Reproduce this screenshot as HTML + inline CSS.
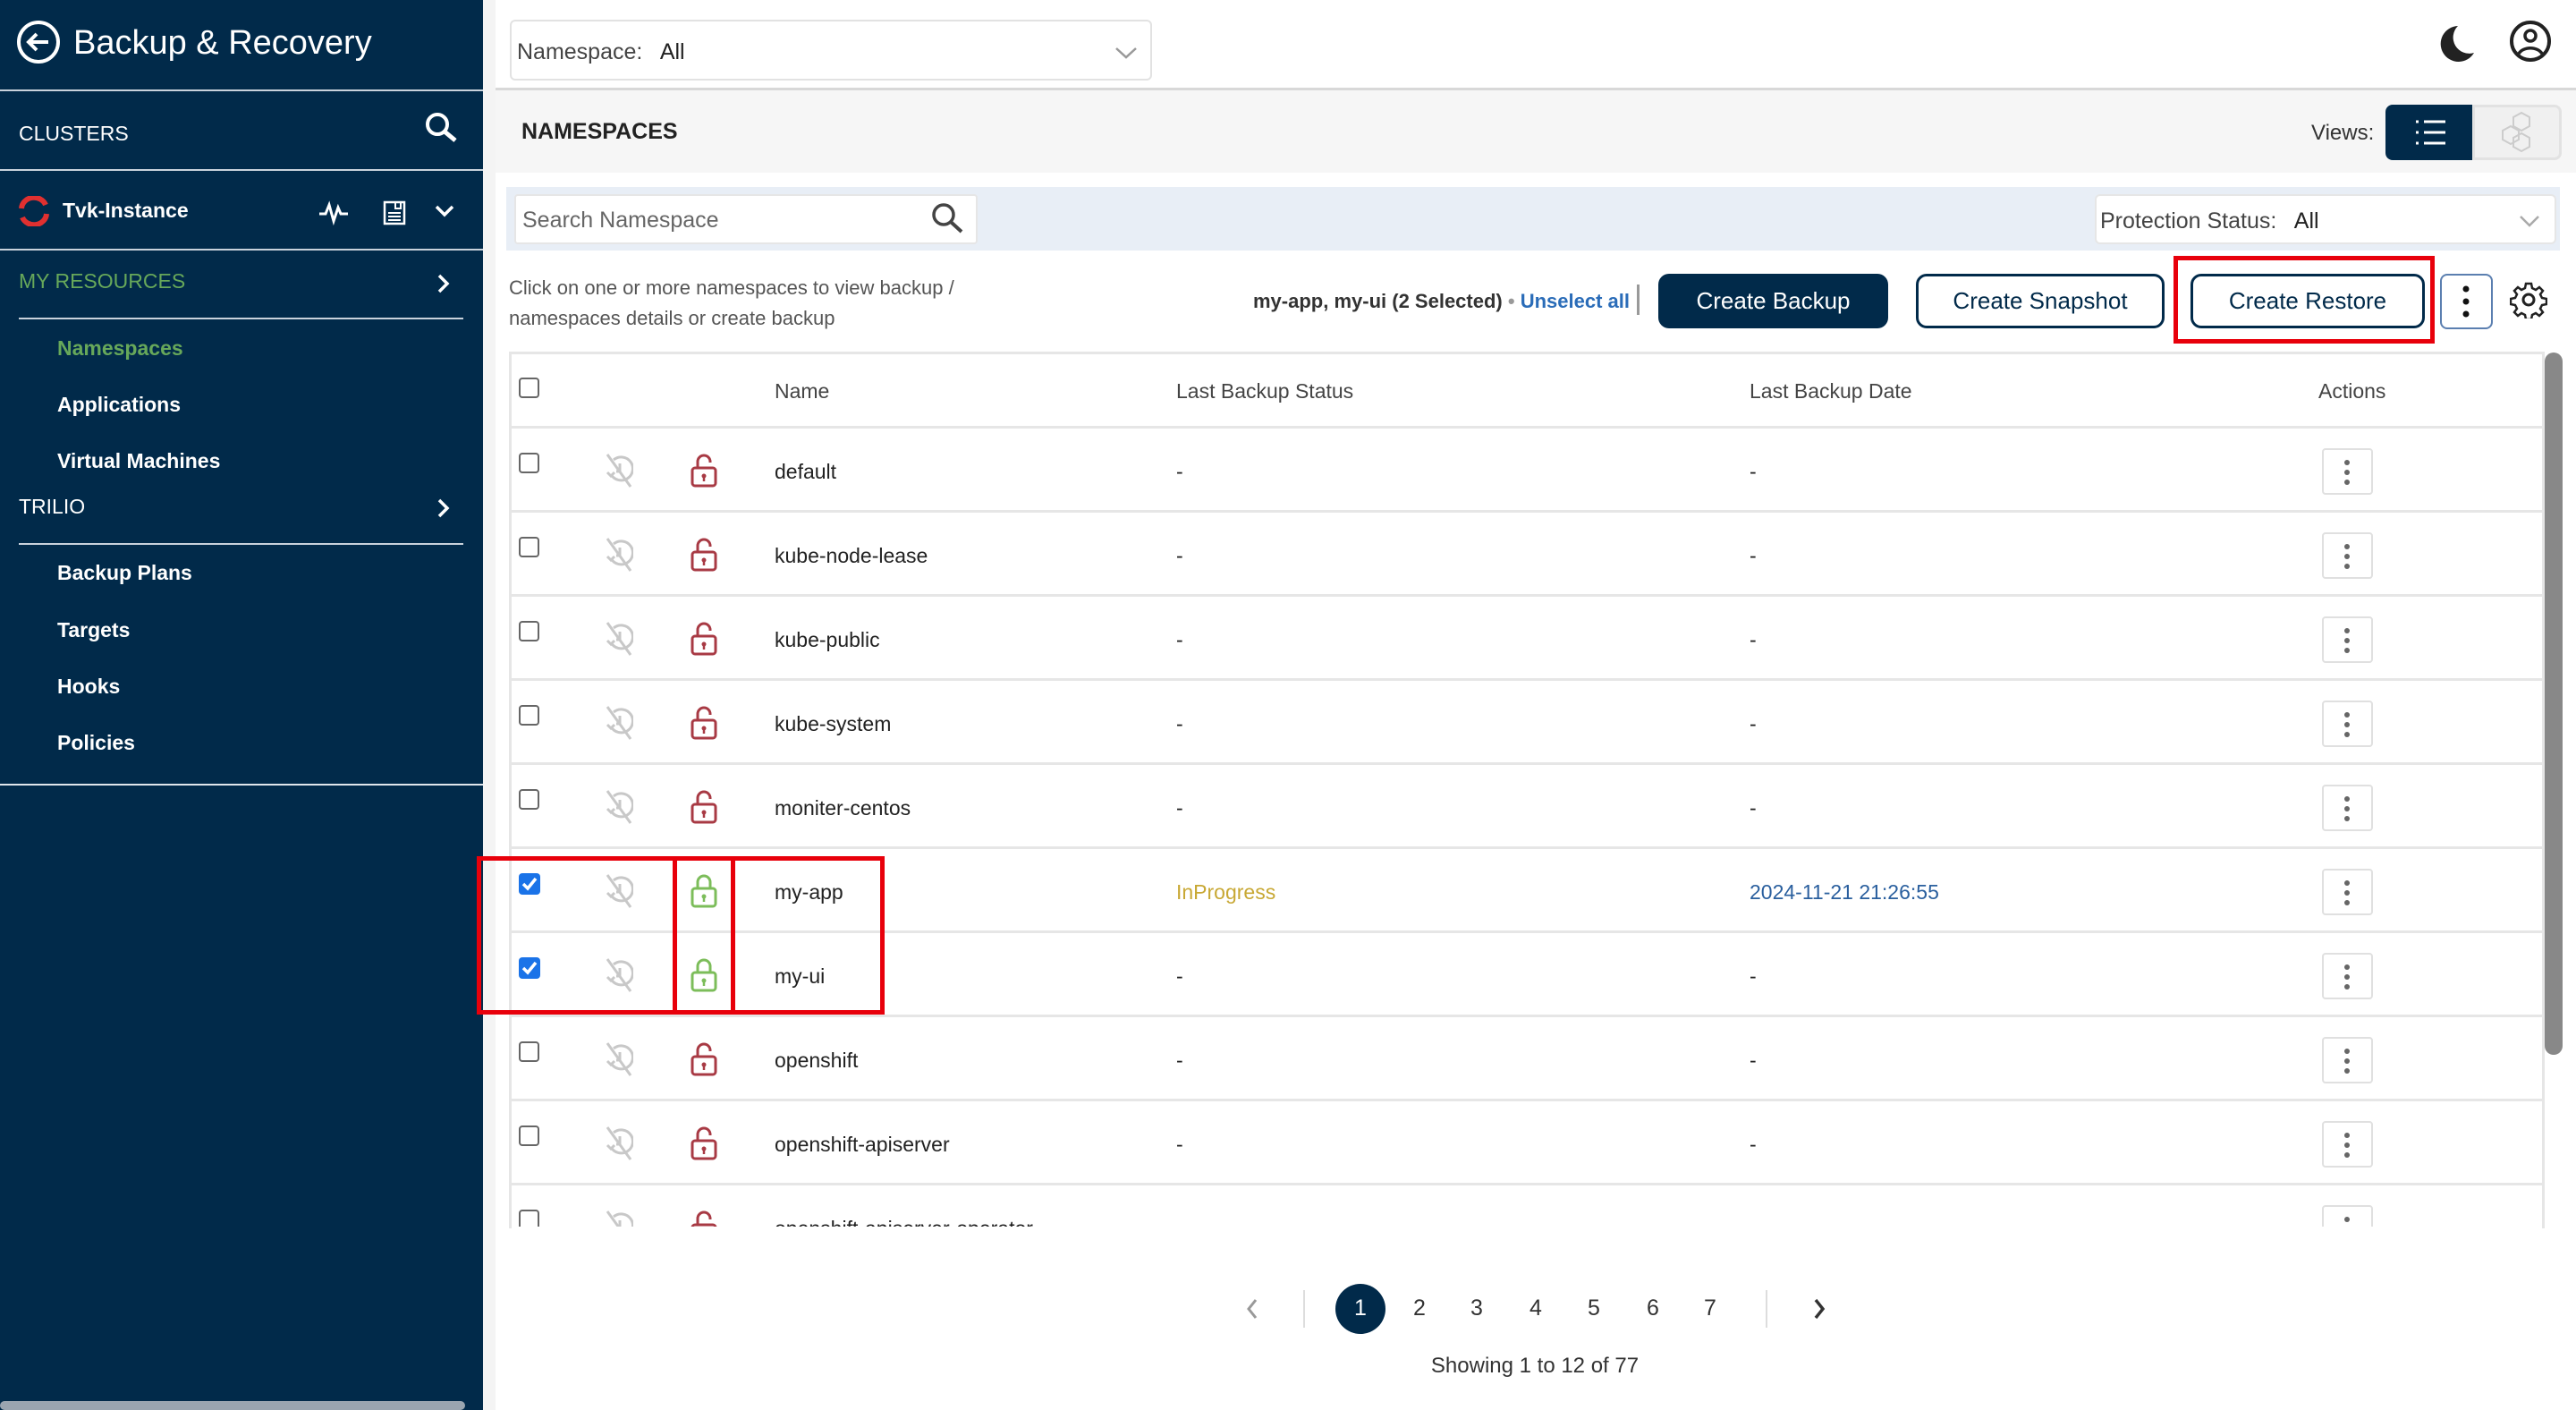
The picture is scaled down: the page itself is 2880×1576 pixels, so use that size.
<!DOCTYPE html>
<html><head><meta charset="utf-8"><style>
*{box-sizing:border-box;margin:0;padding:0}
body{width:2880px;height:1576px;overflow:hidden;background:#fff;font-family:"Liberation Sans",sans-serif;position:relative;color:#222}
.a{position:absolute}
.sb{left:0;top:0;width:540px;height:1576px;background:#012a4a;color:#fff}
.hl{height:2px;background:#c9d2dc}
.nav{font-weight:bold;font-size:23px;left:64px}
.cb{width:23px;height:23px;border:2px solid #666;border-radius:4px;background:#fff}
.cbk{width:24px;height:24px;border-radius:4px;background:#1a73e8}
.t{font-size:23px;color:#222}
.kb{width:57px;height:52px;border:2px solid #e0e0e0;border-radius:4px;background:#fff}
.btn{height:61px;border-radius:12px;font-size:26px;display:flex;align-items:center;justify-content:center}
.red{border:5px solid #e8000b}
.pg{font-size:25px;color:#333;top:1448px;width:40px;text-align:center}
</style></head><body>
<div class="a sb">
 <svg class="a" style="left:18px;top:22px" width="50" height="50" viewBox="0 0 50 50"><circle cx="25" cy="25" r="22" fill="none" stroke="#fff" stroke-width="4"/><path d="M36 25H15M23 16l-9 9 9 9" fill="none" stroke="#fff" stroke-width="4"/></svg>
 <div class="a" style="left:82px;top:27px;font-size:38px">Backup &amp; Recovery</div>
 <div class="a hl" style="left:0;top:100px;width:540px"></div>
 <div class="a" style="left:21px;top:136px;font-size:23px">CLUSTERS</div>
 <svg class="a" style="left:474px;top:124px" width="40" height="40" viewBox="0 0 40 40"><circle cx="15" cy="15" r="11" fill="none" stroke="#fff" stroke-width="4"/><path d="M23 23l12 10" stroke="#fff" stroke-width="5"/></svg>
 <div class="a hl" style="left:0;top:189px;width:540px"></div>
 <svg class="a" style="left:20px;top:219px" width="36" height="34" viewBox="0 0 36 34"><path d="M4 14a14 13 0 0 1 27-4M32 20a14 13 0 0 1-27 4" fill="none" stroke="#e03030" stroke-width="6"/></svg>
 <div class="a" style="left:70px;top:222px;font-size:23px;font-weight:bold">Tvk-Instance</div>
 <svg class="a" style="left:356px;top:222px" width="34" height="30" viewBox="0 0 34 30"><path d="M1 17h7l4-10 5 18 5-15 3 7h8" fill="none" stroke="#fff" stroke-width="3"/></svg>
 <svg class="a" style="left:428px;top:224px" width="26" height="28" viewBox="0 0 26 28"><rect x="2" y="2" width="22" height="24" fill="none" stroke="#fff" stroke-width="2.5"/><path d="M6 14h14M6 18h14M6 22h14M14 2v7h6V2" fill="none" stroke="#fff" stroke-width="2"/></svg>
 <svg class="a" style="left:486px;top:228px" width="22" height="16" viewBox="0 0 22 16"><path d="M2 3l9 9 9-9" fill="none" stroke="#fff" stroke-width="3.5"/></svg>
 <div class="a hl" style="left:0;top:278px;width:540px"></div>
 <div class="a" style="left:21px;top:301px;font-size:23px;color:#67a85a">MY RESOURCES</div>
 <svg class="a" style="left:488px;top:305px" width="16" height="24" viewBox="0 0 16 24"><path d="M3 3l9 9-9 9" fill="none" stroke="#fff" stroke-width="3.5"/></svg>
 <div class="a hl" style="left:21px;top:355px;width:497px"></div>
 <div class="a nav" style="top:376px;color:#67a85a">Namespaces</div>
 <div class="a nav" style="top:439px">Applications</div>
 <div class="a nav" style="top:502px">Virtual Machines</div>
 <div class="a" style="left:21px;top:553px;font-size:23px">TRILIO</div>
 <svg class="a" style="left:488px;top:556px" width="16" height="24" viewBox="0 0 16 24"><path d="M3 3l9 9-9 9" fill="none" stroke="#fff" stroke-width="3.5"/></svg>
 <div class="a hl" style="left:21px;top:607px;width:497px"></div>
 <div class="a nav" style="top:627px">Backup Plans</div>
 <div class="a nav" style="top:691px">Targets</div>
 <div class="a nav" style="top:754px">Hooks</div>
 <div class="a nav" style="top:817px">Policies</div>
 <div class="a hl" style="left:0;top:876px;width:540px;background:#e0e6ec"></div>
 <div class="a" style="left:0;top:1566px;width:520px;height:10px;background:#9aa5b0;border-radius:5px"></div>
</div>
<div class="a" style="left:540px;top:0;width:14px;height:1576px;background:#f4f4f4"></div>
<div class="a" style="left:570px;top:22px;width:718px;height:68px;border:2px solid #e2e2e2;border-radius:6px"></div>
<div class="a" style="left:578px;top:44px;font-size:25px;color:#444">Namespace:&nbsp;&nbsp; <span style="color:#222">All</span></div>
<svg class="a" style="left:1246px;top:51px" width="26" height="16" viewBox="0 0 26 16"><path d="M2 3l11 10 11-10" fill="none" stroke="#999" stroke-width="2.5"/></svg>
<svg class="a" style="left:2724px;top:25px" width="44" height="48" viewBox="0 0 44 48"><path d="M24 4a20 20 0 1 0 18 30A18 18 0 0 1 24 4z" fill="#222"/></svg>
<svg class="a" style="left:2804px;top:21px" width="50" height="50" viewBox="0 0 50 50"><circle cx="25" cy="25" r="21" fill="none" stroke="#222" stroke-width="4"/><circle cx="25" cy="19" r="6" fill="none" stroke="#222" stroke-width="3.5"/><path d="M12 39a14 10 0 0 1 26 0" fill="none" stroke="#222" stroke-width="3.5"/></svg>
<div class="a" style="left:554px;top:98px;width:2326px;height:3px;background:#d8d8d8"></div>
<div class="a" style="left:554px;top:101px;width:2326px;height:92px;background:#f6f6f6"></div>
<div class="a" style="left:583px;top:133px;font-size:25px;font-weight:bold;color:#222">NAMESPACES</div>
<div class="a" style="left:2584px;top:135px;font-size:24px;color:#333">Views:</div>
<div class="a" style="left:2667px;top:117px;width:97px;height:62px;background:#012a4a;border-radius:8px 0 0 8px"></div>
<svg class="a" style="left:2700px;top:131px" width="36" height="34" viewBox="0 0 36 34"><g stroke="#fff" stroke-width="3"><path d="M1 5h3M10 5h24M1 17h3M10 17h24M1 29h3M10 29h24"/></g></svg>
<div class="a" style="left:2764px;top:117px;width:100px;height:62px;background:#f0f0f0;border:3px solid #e2e2e2;border-radius:0 8px 8px 0"></div>
<svg class="a" style="left:2795px;top:123px" width="44" height="50" viewBox="0 0 44 50"><g fill="none" stroke="#ccc" stroke-width="2"><path d="M24 3l9 5v10l-9 5-9-5V8z"/><path d="M12 18l9 5v10l-9 5-9-5V23z"/><path d="M24 26l9 5v10l-9 5-9-5V31z"/></g></svg>
<div class="a" style="left:566px;top:209px;width:2296px;height:71px;background:#e8eef6"></div>
<div class="a" style="left:575px;top:217px;width:518px;height:56px;background:#fff;border:2px solid #e6e6e6;border-radius:4px"></div>
<div class="a" style="left:584px;top:232px;font-size:25px;color:#666">Search Namespace</div>
<svg class="a" style="left:1040px;top:225px" width="40" height="40" viewBox="0 0 40 40"><circle cx="15" cy="15" r="11" fill="none" stroke="#444" stroke-width="3.5"/><path d="M23 23l12 11" stroke="#444" stroke-width="4"/></svg>
<div class="a" style="left:2342px;top:217px;width:516px;height:56px;background:#fff;border:2px solid #e6e6e6;border-radius:6px"></div>
<div class="a" style="left:2348px;top:233px;font-size:25px;color:#444">Protection Status:&nbsp;&nbsp; <span style="color:#222">All</span></div>
<svg class="a" style="left:2816px;top:239px" width="24" height="16" viewBox="0 0 24 16"><path d="M2 3l10 10 10-10" fill="none" stroke="#aaa" stroke-width="2.5"/></svg>
<div class="a" style="left:569px;top:305px;font-size:22px;color:#555;line-height:34px">Click on one or more namespaces to view backup /<br>namespaces details or create backup</div>
<div class="a" style="left:1401px;top:324px;font-size:22px;font-weight:bold;color:#333">my-app, my-ui (2 Selected) <span style="color:#999">•</span> <span style="color:#2a6cb8">Unselect all</span></div>
<div class="a" style="left:1830px;top:318px;width:3px;height:34px;background:#999"></div>
<div class="a btn" style="left:1854px;top:306px;width:257px;background:#012a4a;color:#fff">Create Backup</div>
<div class="a btn" style="left:2142px;top:306px;width:278px;border:3px solid #012a4a;color:#012a4a">Create Snapshot</div>
<div class="a red" style="left:2430px;top:286px;width:292px;height:98px"></div>
<div class="a btn" style="left:2449px;top:306px;width:262px;border:3px solid #012a4a;color:#012a4a">Create Restore</div>
<div class="a" style="left:2728px;top:306px;width:59px;height:62px;border:2px solid #5b7fb0;border-radius:8px"></div>
<svg class="a" style="left:2750px;top:318px" width="14" height="38" viewBox="0 0 14 38"><g fill="#111"><circle cx="7" cy="5" r="3.5"/><circle cx="7" cy="19" r="3.5"/><circle cx="7" cy="33" r="3.5"/></g></svg>
<svg class="a" style="left:2806px;top:314px" width="42" height="42" viewBox="0 0 42 42"><circle cx="21" cy="21" r="6" fill="none" stroke="#222" stroke-width="3"/><path d="M18 3h6l1 5 4 2 4-3 4 4-3 4 2 4 5 1v6l-5 1-2 4 3 4-4 4-4-3-4 2-1 5h-6l-1-5-4-2-4 3-4-4 3-4-2-4-5-1v-6l5-1 2-4-3-4 4-4 4 3 4-2z" fill="none" stroke="#222" stroke-width="2.5"/></svg>
<div class="a" style="left:569px;top:393px;width:2276px;height:980px;border:3px solid #e6e6e6;border-bottom:none"></div>
<div class="a" style="left:2845px;top:394px;width:20px;height:785px;background:#888;border-radius:10px"></div>
<div class="a" style="left:572px;top:394px;width:2272px;height:85px;border-bottom:3px solid #e6e6e6"></div>
<div class="a cb" style="left:580px;top:422px"></div>
<div class="a t" style="left:866px;top:424px;color:#444">Name</div>
<div class="a t" style="left:1315px;top:424px;color:#444">Last Backup Status</div>
<div class="a t" style="left:1956px;top:424px;color:#444">Last Backup Date</div>
<div class="a t" style="left:2592px;top:424px;color:#444">Actions</div>
<div class="a" style="left:572px;top:479px;width:2272px;height:892px;overflow:hidden" id="tb">
<svg width="0" height="0" style="position:absolute"><defs>
<g id="ic"><g fill="none" stroke="#c8c8c8" stroke-width="3"><path d="M10 8a13 13 0 1 1-3 16"/><path d="M3 22l4 4 4-4"/><path d="M17 12v9h-4"/><path d="M3 2l26 36"/></g></g>
<g id="lr"><g fill="none" stroke="#a83a44" stroke-width="3"><rect x="3" y="17" width="26" height="20" rx="3"/><path d="M9 17V10a7 7 0 0 1 14 0v1"/></g><circle cx="16" cy="26" r="2.5" fill="#a83a44"/><path d="M16 27v5" stroke="#a83a44" stroke-width="2.5"/></g>
<g id="lg"><g fill="none" stroke="#7cbd5a" stroke-width="3"><rect x="3" y="17" width="26" height="20" rx="3"/><path d="M9 17V10a7 7 0 0 1 14 0v7"/></g><circle cx="16" cy="26" r="2.5" fill="#7cbd5a"/><path d="M16 27v5" stroke="#7cbd5a" stroke-width="2.5"/></g>
<g id="kb"><g fill="#666"><circle cx="4" cy="4" r="3"/><circle cx="4" cy="15" r="3"/><circle cx="4" cy="26" r="3"/></g></g>
</defs></svg>
</div>
<script>
var names=["default","kube-node-lease","kube-public","kube-system","moniter-centos","my-app","my-ui","openshift","openshift-apiserver","openshift-apiserver-operator"];
var h="";
for(var i=0;i<names.length;i++){
 var y=i*94, sel=(i==5||i==6);
 h+='<div class="a" style="left:0;top:'+y+'px;width:2272px;height:94px;border-bottom:3px solid #e6e6e6">';
 h+=sel?'<div class="a cbk" style="left:8px;top:27px"><svg width="24" height="24" viewBox="0 0 24 24"><path d="M5 12l5 5 9-11" fill="none" stroke="#fff" stroke-width="3.5"/></svg></div>':'<div class="a cb" style="left:8px;top:27px"></div>';
 h+='<svg class="a" style="left:104px;top:27px" width="32" height="42" viewBox="0 0 32 42"><use href="#ic"/></svg>';
 h+='<svg class="a" style="left:199px;top:27px" width="32" height="40" viewBox="0 0 32 40"><use href="#'+(sel?'lg':'lr')+'"/></svg>';
 h+='<div class="a t" style="left:294px;top:35px">'+names[i]+'</div>';
 h+='<div class="a t" style="left:743px;top:35px;'+(i==5?'color:#c8a834':'')+'">'+(i==5?'InProgress':'-')+'</div>';
 h+='<div class="a t" style="left:1384px;top:35px;'+(i==5?'color:#2a5f9e':'')+'">'+(i==5?'2024-11-21 21:26:55':'-')+'</div>';
 h+='<div class="a kb" style="left:2024px;top:22px"><svg style="position:absolute;left:22px;top:10px" width="8" height="32" viewBox="0 0 8 32"><use href="#kb"/></svg></div>';
 h+='</div>';
}
document.getElementById("tb").insertAdjacentHTML("beforeend",h);
</script>
<div class="a red" style="left:533px;top:957px;width:224px;height:177px"></div>
<div class="a red" style="left:752px;top:957px;width:70px;height:177px"></div>
<div class="a red" style="left:817px;top:957px;width:172px;height:177px"></div>
<svg class="a" style="left:1392px;top:1450px" width="16" height="26" viewBox="0 0 16 26"><path d="M12 3l-8 10 8 10" fill="none" stroke="#999" stroke-width="3"/></svg>
<div class="a" style="left:1457px;top:1442px;width:2px;height:42px;background:#ddd"></div>
<div class="a" style="left:1493px;top:1435px;width:56px;height:56px;border-radius:50%;background:#012a4a"></div>
<div class="a pg" style="left:1501px;color:#fff">1</div>
<div class="a pg" style="left:1567px">2</div>
<div class="a pg" style="left:1631px">3</div>
<div class="a pg" style="left:1697px">4</div>
<div class="a pg" style="left:1762px">5</div>
<div class="a pg" style="left:1828px">6</div>
<div class="a pg" style="left:1892px">7</div>
<div class="a" style="left:1974px;top:1442px;width:2px;height:42px;background:#ddd"></div>
<svg class="a" style="left:2026px;top:1450px" width="16" height="26" viewBox="0 0 16 26"><path d="M4 3l8 10-8 10" fill="none" stroke="#333" stroke-width="3.5"/></svg>
<div class="a" style="left:1516px;top:1513px;width:400px;text-align:center;font-size:24px;color:#333">Showing 1 to 12 of 77</div>
</body></html>
